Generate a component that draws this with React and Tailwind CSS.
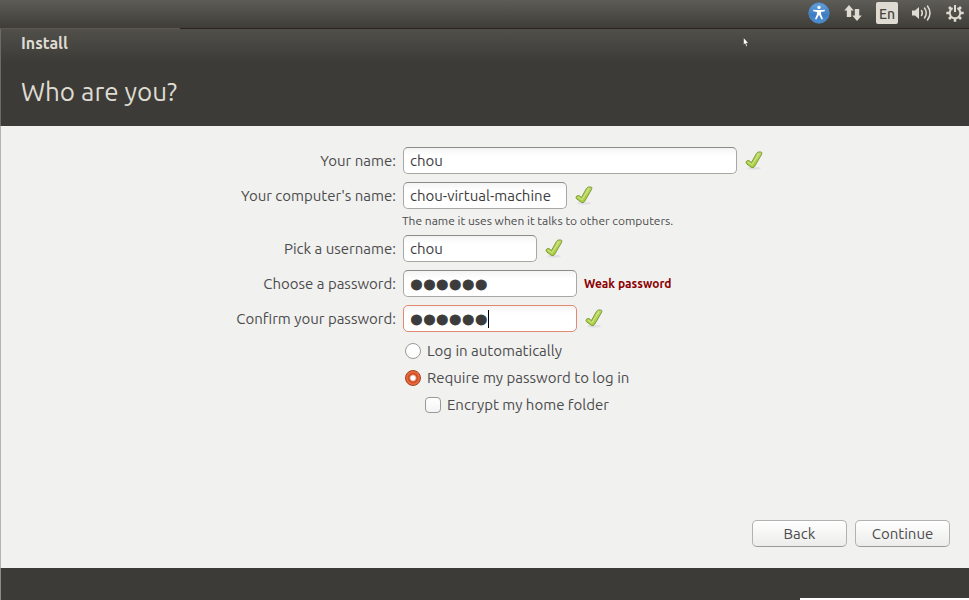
import { useState } from "react";

const FIELD = "block h-[27px] max-w-full rounded-[5px] border px-1.5 text-[#3c3c3c] outline-none bg-linear-to-b from-[#f4f4f4] to-white to-30%";
const PLAIN = "border-[#a9a6a3] border-t-[#8d8a87]";
const DOTS = "pt-0.5 font-['Liberation_Sans',sans-serif] text-[37px] leading-[23px] [-webkit-text-stroke:1px_#3c3c3c]";
const BUTTON = "h-[27px] w-[95px] rounded-[5px] border border-[#b4b2af] border-b-[#9c9a97] bg-linear-to-b from-white to-[#ececeb] pt-px";
const RADIO = "size-4 appearance-none rounded-full border border-[#9b9895] bg-white checked:border-[#a33c1b] checked:bg-[radial-gradient(circle,#fff_2px,#c9441b_4px,#e96b3d_6px)]";

function Tick() {
  return (
    <svg width="20" height="20" viewBox="0 0 20 20" className="shrink-0" aria-label="OK">
      <defs>
        <linearGradient id="tick" x1="0" y1="0" x2="0" y2="1">
          <stop offset="0" stopColor="#bcd868" />
          <stop offset="1" stopColor="#a3d03a" />
        </linearGradient>
      </defs>
      <ellipse cx="10" cy="17.2" rx="7" ry="1.5" fill="#e0e0e6" />
      <path d="M2 11.4 Q2.4 9.8 3.8 9.6 Q5.2 9.4 5.8 10.2 L7.4 11.6 L12.4 2.6 Q13.2 1.2 14.6 1 Q16.4 0.7 17.8 1.4 Q18 2.6 17.2 4 L10.6 15.4 Q9 17.6 7.4 16.4 L2.6 12.8 Z" fill="url(#tick)" stroke="#82983c" strokeWidth="1" strokeLinejoin="round" />
      <path d="M4 11 L7.8 14 L15 2.4" fill="none" stroke="#d6ea90" strokeWidth="1" />
    </svg>
  );
}

function TopPanel() {
  return (
    <header className="flex h-7 items-center justify-end bg-linear-to-b from-[#5d5c56] to-[#3e3d38] pr-[5px] pb-0.5 text-[#dfdbd2]">
      <button aria-label="Accessibility" className="mr-3.5">
        <svg width="22" height="22" viewBox="0 0 22 22" className="block">
          <defs>
            <linearGradient id="access" x1="0" y1="0" x2="0" y2="1">
              <stop offset="0" stopColor="#6aa3dc" />
              <stop offset="0.6" stopColor="#3c7cc2" />
              <stop offset="1" stopColor="#4f92d4" />
            </linearGradient>
          </defs>
          <circle cx="11" cy="11" r="10.2" fill="url(#access)" stroke="#4b86bd" />
          <circle cx="11" cy="5.4" r="1.7" fill="#fff" />
          <path d="M5.2 7.8 L9.5 8.1 H12.5 L16.8 7.8 V9.2 L13 10 L13.1 12.3 L15 17 L13.6 17.5 L11.2 13.3 H10.8 L8.4 17.5 L7 17 L8.9 12.3 L9 10 L5.2 9.2 Z" fill="#fff" />
        </svg>
      </button>
      <button aria-label="Network" className="mr-3.5">
        <svg width="18" height="18" viewBox="0 0 18 18" className="block" fill="currentColor">
          <path d="M5 1 L9.8 6.5 H7.2 V13 H2.8 V6.5 H0.2 Z" />
          <path d="M13 17 L8.2 11.5 H10.8 V5 H15.2 V11.5 H17.8 Z" />
        </svg>
      </button>
      <button aria-label="Keyboard layout" className="mr-[13px] h-[22px] w-[22px] rounded-xs bg-[#dfdbd2] text-[14px] leading-6 font-medium text-[#45443f]">En</button>
      <button aria-label="Sound" className="mr-3.5">
        <svg width="21" height="18" viewBox="0 0 21 18" className="block" fill="none" stroke="currentColor" strokeWidth="1.5" strokeLinecap="round">
          <path d="M1 6.5 H4 L8 3 V15 L4 11.5 H1 Z" fill="currentColor" stroke="none" />
          <path d="M10.5 6.5 Q12.2 9 10.5 11.5" />
          <path d="M13.5 4 Q17 9 13.5 14" />
          <path d="M16.5 2 Q21.5 9 16.5 16" />
        </svg>
      </button>
      <button aria-label="Session">
        <svg width="18" height="18" viewBox="0 0 18 18" className="block" fill="none" stroke="currentColor">
          <path d="M6.6 4.2 A5.3 5.3 0 1 0 11.4 4.2" strokeWidth="2" />
          <path d="M9 1 V8" strokeWidth="2" />
          <path d="M3 3 L5 5 M15 3 L13 5 M0.3 9 H3.5 M14.5 9 H17.7 M3 15 L5 13 M15 15 L13 13 M9 14.5 V17.7" strokeWidth="2.6" />
        </svg>
      </button>
    </header>
  );
}

function Row({ id, label, children }) {
  return (
    <div className="grid grid-cols-[40.8%_1fr] gap-x-[7px]">
      <label htmlFor={id} className="text-right leading-[27px]">{label}</label>
      <div className="flex items-center gap-[7px]">{children}</div>
    </div>
  );
}

export default function App() {
  const [name, setName] = useState("chou");
  const [host, setHost] = useState("chou-virtual-machine");
  const [user, setUser] = useState("chou");
  const [password, setPassword] = useState("secret");
  const [confirm, setConfirm] = useState("secret");
  const [login, setLogin] = useState("require");
  const [encrypt, setEncrypt] = useState(false);

  return (
    <div className="flex min-h-screen flex-col bg-[#3c3b37] font-[Ubuntu,'Noto_Sans',sans-serif] text-[15px] text-[#4c4c4c]">
      <TopPanel />
      <div className="flex h-px">
        <div className="w-[180px] bg-[#5d5551]" />
        <div className="flex-1 bg-[#2b2022]" />
      </div>

      <div className="relative border-l border-[#6c6b66] bg-linear-to-b from-[#504f4a] to-[#3c3b37] to-35% px-5 text-[#dfdbd2]">
        <h1 className="pt-1 text-[16px] leading-5 font-bold">Install</h1>
        <h2 className="pt-[21px] pb-4 text-[26px] leading-9">Who are you?</h2>
        <svg width="6" height="10" viewBox="0 0 6 10" className="absolute top-2 left-[742px]" aria-hidden="true">
          <path d="M0.5 0.5 V8 L2 6.6 L3.2 9.4 L4.4 8.9 L3.3 6.2 H5.5 Z" fill="#fff" stroke="#222" strokeWidth="0.4" />
        </svg>
      </div>

      <form className="flex flex-1 flex-col border-l border-[#b5b4b0] bg-[#f1f1f0] pt-[21px]" onSubmit={(e) => e.preventDefault()}>
        <Row id="name" label="Your name:">
          <input id="name" value={name} onChange={(e) => setName(e.target.value)} className={`${FIELD} ${PLAIN} w-[334px]`} />
          <Tick />
        </Row>
        <div className="pt-2">
          <Row id="host" label="Your computer's name:">
            <input id="host" value={host} onChange={(e) => setHost(e.target.value)} className={`${FIELD} ${PLAIN} w-[164px]`} />
            <Tick />
          </Row>
        </div>
        <div className="grid grid-cols-[40.8%_1fr] gap-x-1.5">
          <p className="col-start-2 pt-0.5 pb-1 text-[12px] leading-5">The name it uses when it talks to other computers.</p>
        </div>
        <Row id="user" label="Pick a username:">
          <input id="user" value={user} onChange={(e) => setUser(e.target.value)} className={`${FIELD} ${PLAIN} w-[134px]`} />
          <Tick />
        </Row>
        <div className="pt-2">
          <Row id="password" label="Choose a password:">
            <input id="password" type="password" value={password} onChange={(e) => setPassword(e.target.value)} className={`${FIELD} ${PLAIN} ${DOTS} w-[174px]`} />
            <strong className="text-[12px] font-bold text-[#8b0000]">Weak password</strong>
          </Row>
        </div>
        <div className="pt-2">
          <Row id="confirm" label="Confirm your password:">
            <div className="relative">
              <input id="confirm" type="password" value={confirm} onChange={(e) => setConfirm(e.target.value)} className={`${FIELD} ${DOTS} w-[174px] border-[#e08a72] caret-transparent`} />
              <span className="absolute top-[5px] left-[85px] h-[18px] w-px bg-black" />
            </div>
            <Tick />
          </Row>
        </div>

        <div className="grid grid-cols-[40.8%_1fr] gap-x-[9px] pt-[5px]">
          <div className="col-start-2 leading-[27px]">
            <label className="flex items-center gap-1.5">
              <input type="radio" name="login" checked={login === "auto"} onChange={() => setLogin("auto")} className={RADIO} />
              Log in automatically
            </label>
            <label className="flex items-center gap-1.5">
              <input type="radio" name="login" checked={login === "require"} onChange={() => setLogin("require")} className={RADIO} />
              Require my password to log in
            </label>
            <label className="flex items-center gap-1.5 pl-5">
              <input type="checkbox" checked={encrypt} onChange={() => setEncrypt(!encrypt)}
                className="size-4 appearance-none rounded-sm border border-[#9b9895] bg-linear-to-b from-white to-[#f4f4f4] checked:bg-[#e96b3d] checked:bg-none" />
              Encrypt my home folder
            </label>
          </div>
        </div>

        <div className="mt-auto flex justify-end gap-2 pr-[19px] pb-[21px]">
          <button type="button" className={BUTTON}>Back</button>
          <button type="submit" className={BUTTON}>Continue</button>
        </div>
      </form>

      <footer className="flex h-8 items-end justify-end border-l border-[#8c8b86]">
        <div className="h-0.5 w-[169px] bg-white" />
      </footer>
    </div>
  );
}
